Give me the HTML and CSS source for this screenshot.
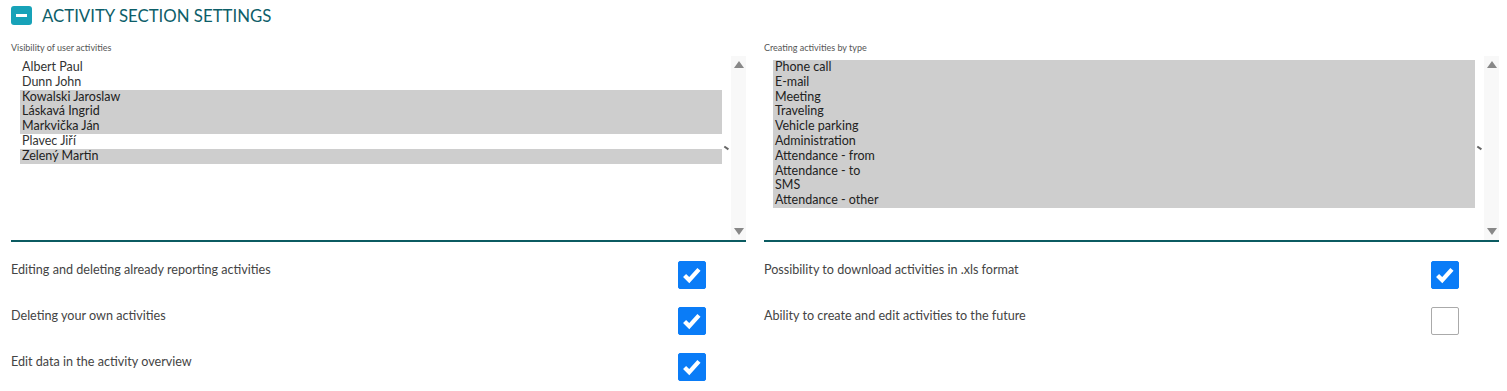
FILE: index.html
```html
<!DOCTYPE html>
<html lang="en">
<head>
  <meta charset="UTF-8" />
  <title>Activity section settings</title>
  <link rel="stylesheet" href="styles.css">
</head>
<body>
  <div class="section-head">
    <span class="toggle"><span class="toggle-bar"></span></span>
    <h2>ACTIVITY SECTION SETTINGS</h2>
  </div>

  <div class="columns">
    <div class="col">
      <label class="field-label">Visibility of user activities</label>
      <div class="listbox">
        <ul class="options">
          <li>Albert Paul</li>
          <li>Dunn John</li>
          <li class="sel">Kowalski Jaroslaw</li>
          <li class="sel">Láskavá Ingrid</li>
          <li class="sel">Markvička Ján</li>
          <li>Plavec Jiří</li>
          <li class="sel">Zelený Martin</li>
        </ul>
        <span class="grip"></span>
        <div class="scrollbar">
          <span class="arrow up"></span>
          <span class="arrow down"></span>
        </div>
      </div>

      <div class="switches">
        <div class="switch-row">
          <span>Editing and deleting already reporting activities</span>
          <span class="check on"><svg viewBox="0 0 28 28"><polyline points="6,14.5 11,19.5 21.5,8" /></svg></span>
        </div>
        <div class="switch-row">
          <span>Deleting your own activities</span>
          <span class="check on"><svg viewBox="0 0 28 28"><polyline points="6,14.5 11,19.5 21.5,8" /></svg></span>
        </div>
        <div class="switch-row">
          <span>Edit data in the activity overview</span>
          <span class="check on"><svg viewBox="0 0 28 28"><polyline points="6,14.5 11,19.5 21.5,8" /></svg></span>
        </div>
      </div>
    </div>

    <div class="col">
      <label class="field-label">Creating activities by type</label>
      <div class="listbox">
        <ul class="options">
          <li class="sel">Phone call</li>
          <li class="sel">E-mail</li>
          <li class="sel">Meeting</li>
          <li class="sel">Traveling</li>
          <li class="sel">Vehicle parking</li>
          <li class="sel">Administration</li>
          <li class="sel">Attendance - from</li>
          <li class="sel">Attendance - to</li>
          <li class="sel">SMS</li>
          <li class="sel">Attendance - other</li>
        </ul>
        <span class="grip"></span>
        <div class="scrollbar">
          <span class="arrow up"></span>
          <span class="arrow down"></span>
        </div>
      </div>

      <div class="switches">
        <div class="switch-row">
          <span>Possibility to download activities in .xls format</span>
          <span class="check on"><svg viewBox="0 0 28 28"><polyline points="6,14.5 11,19.5 21.5,8" /></svg></span>
        </div>
        <div class="switch-row">
          <span>Ability to create and edit activities to the future</span>
          <span class="check"></span>
        </div>
      </div>
    </div>
  </div>
</body>
</html>
```

FILE: styles.css
```css
body {
  margin: 0;
  font-family: Lato, "Open Sans", sans-serif;
  color: #333;
  background: #fff;
}
.section-head {
  display: flex;
  align-items: center;
  gap: 10px;
  padding: 5px 11px 0;
  height: 20px;
}
.section-head h2 {
  margin: 0;
  font-size: 16.8px;
  font-weight: 400;
  color: #0d5e69;
}
.toggle {
  width: 21px;
  height: 19px;
  border-radius: 3px;
  background: #17a2b8;
  display: flex;
  align-items: center;
  justify-content: center;
}
.toggle-bar {
  width: 11px;
  height: 3px;
  background: #fff;
}
.columns {
  display: grid;
  grid-template-columns: 1fr 1fr;
  column-gap: 18px;
  padding: 0 8px 0 11px;
  margin-top: 17px;
}
.field-label {
  display: block;
  font-size: 9px;
  color: #555;
  height: 14px;
  line-height: 12px;
}
.listbox {
  display: flex;
  height: 184px;
  border-bottom: 2px solid #0b5b61;
}
.options {
  list-style: none;
  margin: 0;
  padding: 4px 0 0 9px;
  flex: 1;
  font-size: 12.5px;
  line-height: 14.8px;
  color: #333;
}
.options li {
  padding-left: 2px;
}
.options li.sel {
  background: #cecece;
  color: #222;
}
.grip {
  align-self: center;
  width: 5px;
  height: 1.5px;
  margin: 0 2px;
  background: #666;
  transform: rotate(35deg);
}
.scrollbar {
  width: 15px;
  background: #f8f8f8;
  display: flex;
  flex-direction: column;
  justify-content: space-between;
  align-items: center;
  padding: 5px 0 5px;
}
.arrow {
  width: 0;
  height: 0;
  border-left: 5px solid transparent;
  border-right: 5px solid transparent;
}
.arrow.up {
  border-bottom: 7px solid #888;
}
.arrow.down {
  border-top: 7px solid #888;
}
.switches {
  margin-top: 19px;
}
.switch-row {
  display: flex;
  justify-content: space-between;
  align-items: flex-start;
  height: 46px;
  padding-right: 40px;
  font-size: 12.6px;
  line-height: 18px;
  color: #444;
}
.check {
  width: 28px;
  height: 28px;
  box-sizing: border-box;
  border-radius: 2px;
  border: 1px solid #aaa;
  background: #fff;
}
.check.on {
  background: #0a7cf7;
  border-color: #0a7cf7;
}
.check svg {
  display: block;
  width: 26px;
  height: 26px;
  fill: none;
  stroke: #fff;
  stroke-width: 4.6;
}
```
